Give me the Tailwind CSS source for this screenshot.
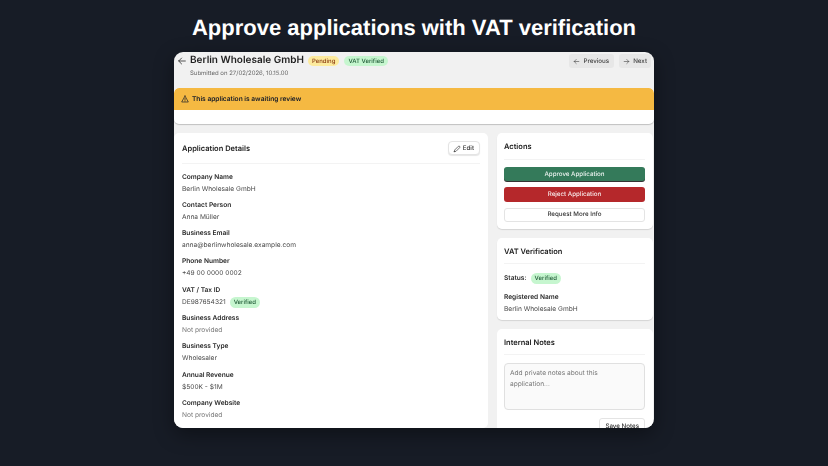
<!doctype html>
<html lang="en">
<head>
<meta charset="UTF-8" />
<title>Approve applications</title>
<script src="https://cdn.jsdelivr.net/npm/@tailwindcss/browser@4"></script>
</head>
<body class="bg-[#171c26] font-['Inter',sans-serif] [text-rendering:geometricPrecision]">
<div class="w-[828px] h-[466px] overflow-hidden flex flex-col items-center">
  <h1 class="mt-[13px] h-[30px] leading-[30px] font-['Liberation_Sans',sans-serif] font-bold text-[22px] text-white">Approve applications with VAT verification</h1>
  <div class="mt-[9px] w-[480px] h-[376px] shrink-0 rounded-[9px] overflow-hidden bg-[#f1f1f1] shadow-[0_6px_20px_rgba(0,0,0,0.4)] flex flex-col [will-change:transform]">
    <!-- header -->
    <div class="h-[36px] shrink-0 flex justify-between pl-[3px] pr-[3px] pt-[2px]">
      <div class="flex items-start">
        <svg class="w-[10px] h-[10px] mt-[2px] text-[#333]" viewBox="0 0 24 24" fill="none" stroke="currentColor" stroke-width="2" stroke-linecap="round" stroke-linejoin="round"><path d="M20 12H4M11 5l-7 7 7 7"/></svg>
        <div class="ml-[3px]">
          <div class="flex items-center h-[13px]">
            <span class="text-[10px] font-semibold text-[#222]">Berlin Wholesale GmbH</span>
            <span class="ml-[4px] h-[10px] px-[4px] rounded-full bg-[#fdeb9e] text-[6px] leading-[11px] font-medium text-[#8a3b12]">Pending</span>
            <span class="ml-[5px] h-[10px] px-[4px] rounded-full bg-[#c6f6cf] text-[6px] leading-[11px] font-medium text-[#1f5a36]">VAT Verified</span>
          </div>
          <div class="mt-[2px] text-[6px] leading-[9px] text-[#666]">Submitted on 27/02/2026, 10.15.00</div>
        </div>
      </div>
      <div class="flex gap-[5px]">
        <div class="h-[14px] pl-[4px] pr-[5px] pt-[1px] rounded-[3px] bg-[#e7e7e7] flex items-center gap-[3px] text-[6.2px] font-medium text-[#444]">
          <svg class="w-[7px] h-[7px]" viewBox="0 0 24 24" fill="none" stroke="currentColor" stroke-width="2" stroke-linecap="round" stroke-linejoin="round"><path d="M20 12H4M11 5l-7 7 7 7"/></svg>Previous
        </div>
        <div class="h-[14px] pl-[4px] pr-[4px] pt-[1px] rounded-[3px] bg-[#e7e7e7] flex items-center gap-[3px] text-[6.2px] font-medium text-[#444]">
          <svg class="w-[7px] h-[7px]" viewBox="0 0 24 24" fill="none" stroke="currentColor" stroke-width="2" stroke-linecap="round" stroke-linejoin="round"><path d="M4 12h16M13 5l7 7-7 7"/></svg>Next
        </div>
      </div>
    </div>
    <!-- review banner -->
    <div class="h-[36px] shrink-0 bg-white rounded-[5px] shadow-[0_1px_1px_rgba(0,0,0,0.2)] overflow-hidden">
      <div class="h-[22px] rounded-t-[5px] bg-[#f5b942] flex items-center pl-[7px] gap-[3px] text-[6.6px] font-semibold text-[#141a28]">
        <svg class="w-[8px] h-[8px]" viewBox="0 0 24 24" fill="none" stroke="currentColor" stroke-width="2" stroke-linecap="round" stroke-linejoin="round"><path d="M12 3 2 21h20L12 3z"/><path d="M12 10v5M12 18v.5"/></svg>
        <span class="pt-[1px]">This application is awaiting review</span>
      </div>
    </div>
    <!-- body -->
    <div class="mt-[9px] flex gap-[9px] flex-1 min-h-0">
      <div class="w-[314px] bg-white rounded-[5px] px-[8px]">
        <div class="h-[31px] flex items-center justify-between border-b border-[#f3f3f3]">
          <span class="pt-[1px] text-[7.5px] font-semibold text-[#222]">Application Details</span>
          <div class="h-[14.5px] pl-[4px] pr-[5px] pt-[1px] rounded-[4px] bg-white border border-[#e4e4e4] shadow-[0_1px_1px_rgba(0,0,0,0.1)] flex items-center gap-[2px] text-[6.2px] font-medium text-[#333]">
            <svg class="w-[8px] h-[8px]" viewBox="0 0 24 24" fill="none" stroke="currentColor" stroke-width="2" stroke-linecap="round" stroke-linejoin="round"><path d="M4 20l1-5L16 4a2.5 2.5 0 0 1 4 4L9 19l-5 1z"/></svg>Edit
          </div>
        </div>
        <div class="pt-[8.6px] flex flex-col gap-[10px] text-[6.6px] leading-[9px]">
          <div class="h-[18.3px]"><div class="font-semibold text-[#2a2a2a]">Company Name</div><div class="mt-[3px] text-[#4a4a4a]">Berlin Wholesale GmbH</div></div>
          <div class="h-[18.3px]"><div class="font-semibold text-[#2a2a2a]">Contact Person</div><div class="mt-[3px] text-[#4a4a4a]">Anna Müller</div></div>
          <div class="h-[18.3px]"><div class="font-semibold text-[#2a2a2a]">Business Email</div><div class="mt-[3px] text-[#4a4a4a]">anna@berlinwholesale.example.com</div></div>
          <div class="h-[18.3px]"><div class="font-semibold text-[#2a2a2a]">Phone Number</div><div class="mt-[3px] text-[#4a4a4a]">+49 00 0000 0002</div></div>
          <div class="h-[18.3px]"><div class="font-semibold text-[#2a2a2a]">VAT / Tax ID</div><div class="mt-[2px] flex items-center text-[#4a4a4a]">DE987654321<span class="ml-[4px] h-[11px] px-[4px] rounded-full bg-[#c6f6cf] text-[6px] leading-[11px] font-medium text-[#1f5a36]">Verified</span></div></div>
          <div class="h-[18.3px]"><div class="font-semibold text-[#2a2a2a]">Business Address</div><div class="mt-[3px] text-[#777]">Not provided</div></div>
          <div class="h-[18.3px]"><div class="font-semibold text-[#2a2a2a]">Business Type</div><div class="mt-[3px] text-[#4a4a4a]">Wholesaler</div></div>
          <div class="h-[18.3px]"><div class="font-semibold text-[#2a2a2a]">Annual Revenue</div><div class="mt-[3px] text-[#4a4a4a]">$500K - $1M</div></div>
          <div class="h-[18.3px]"><div class="font-semibold text-[#2a2a2a]">Company Website</div><div class="mt-[3px] text-[#777]">Not provided</div></div>
        </div>
      </div>
      <div class="w-[156px] flex flex-col gap-[9px]">
        <div class="h-[96px] shrink-0 bg-white rounded-[5px] pl-[7px] pr-[8px] shadow-[0_1px_1px_rgba(0,0,0,0.12)]">
          <div class="h-[27px] pt-[1px] flex items-center border-b border-[#f3f3f3] text-[7.5px] font-semibold text-[#222]">Actions</div>
          <div class="mt-[7px] flex flex-col gap-[6px] text-[6.2px] font-medium">
            <div class="h-[14px] pt-[1px] rounded-[3px] bg-[#347a5a] text-white/90 flex items-center justify-center shadow-[0_1px_0_#333]">Approve Application</div>
            <div class="h-[14.5px] pt-[1px] rounded-[3px] bg-[#b5282b] text-white/90 flex items-center justify-center">Reject Application</div>
            <div class="h-[14px] pt-[1px] rounded-[3px] bg-white border border-[#e4e4e4] text-[#333] flex items-center justify-center">Request More Info</div>
          </div>
        </div>
        <div class="h-[82px] shrink-0 bg-white rounded-[5px] pl-[7px] pr-[8px] shadow-[0_1px_1px_rgba(0,0,0,0.12)]">
          <div class="h-[26px] pt-[2px] flex items-center border-b border-[#f3f3f3] text-[7.5px] font-semibold text-[#222]">VAT Verification</div>
          <div class="mt-[9px] flex items-center text-[6.6px] font-semibold text-[#2a2a2a]">Status:<span class="ml-[4px] h-[11px] px-[4px] rounded-full bg-[#c6f6cf] text-[6px] leading-[11px] font-medium text-[#1f5a36]">Verified</span></div>
          <div class="mt-[8.5px] text-[6.6px] leading-[9px] font-semibold text-[#2a2a2a]">Registered Name</div>
          <div class="mt-[3.5px] text-[6.6px] leading-[9px] text-[#4a4a4a]">Berlin Wholesale GmbH</div>
        </div>
        <div class="flex-1 min-h-0 bg-white rounded-t-[5px] pl-[7px] pr-[8px] overflow-hidden">
          <div class="h-[26px] pt-[2px] flex items-center border-b border-[#f3f3f3] text-[7.5px] font-semibold text-[#222]">Internal Notes</div>
          <div class="mt-[8px] h-[47px] rounded-[4px] border border-[#e0e0e0] bg-[#fafafa] pl-[5px] pr-[30px] py-[4px] text-[6.6px] leading-[11px] text-[#777]">Add private notes about this application...</div>
          <div class="mt-[8px] flex justify-end">
            <div class="h-[16px] px-[5px] pt-[1px] rounded-[3px] bg-white border border-[#e4e4e4] flex items-center text-[6.2px] font-medium text-[#333]">Save Notes</div>
          </div>
        </div>
      </div>
    </div>
  </div>
</div>
</body>
</html>
